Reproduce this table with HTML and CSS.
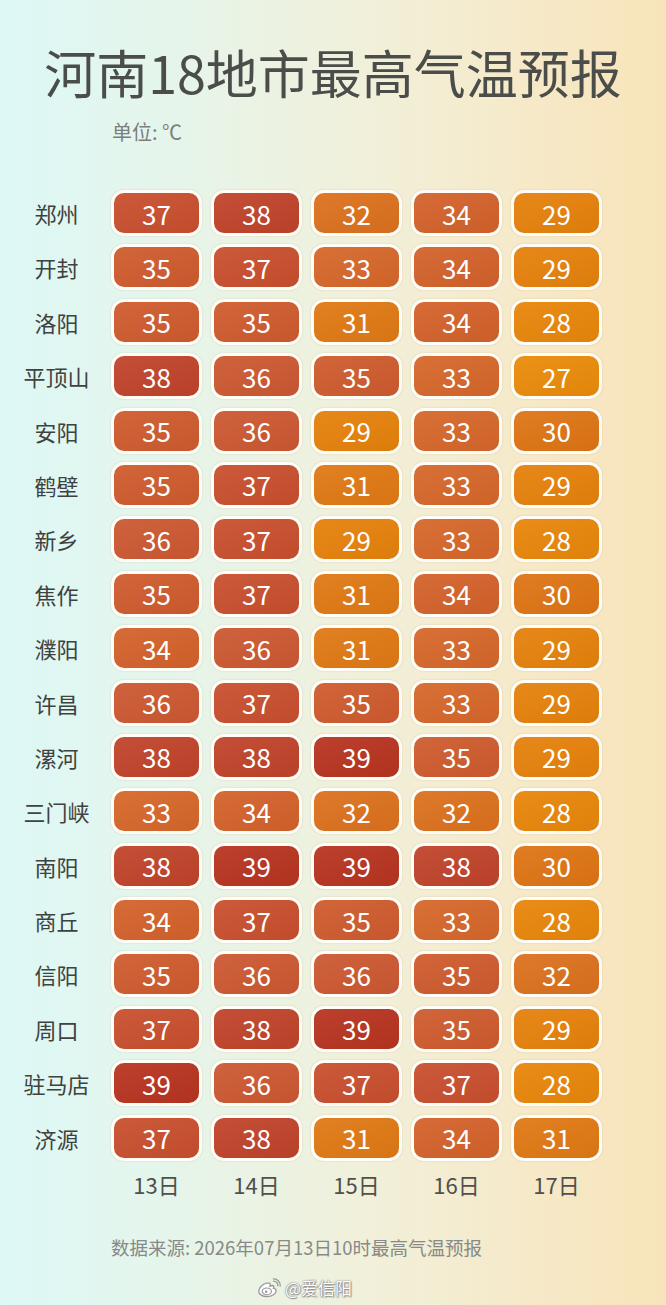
FILE: index.html
```html
<!DOCTYPE html>
<html lang="zh-CN">
<head>
<meta charset="utf-8">
<title>河南18地市最高气温预报</title>
<link rel="stylesheet" href="styles.css">
</head>
<body>
<main class="page">
  <h1 class="title">河南18地市最高气温预报</h1>
  <div class="unit">单位: ℃</div>
  <div class="grid">
    <div class="city">郑州</div><div class="cell t37">37</div><div class="cell t38">38</div><div class="cell t32">32</div><div class="cell t34">34</div><div class="cell t29">29</div>
    <div class="city">开封</div><div class="cell t35">35</div><div class="cell t37">37</div><div class="cell t33">33</div><div class="cell t34">34</div><div class="cell t29">29</div>
    <div class="city">洛阳</div><div class="cell t35">35</div><div class="cell t35">35</div><div class="cell t31">31</div><div class="cell t34">34</div><div class="cell t28">28</div>
    <div class="city">平顶山</div><div class="cell t38">38</div><div class="cell t36">36</div><div class="cell t35">35</div><div class="cell t33">33</div><div class="cell t27">27</div>
    <div class="city">安阳</div><div class="cell t35">35</div><div class="cell t36">36</div><div class="cell t29">29</div><div class="cell t33">33</div><div class="cell t30">30</div>
    <div class="city">鹤壁</div><div class="cell t35">35</div><div class="cell t37">37</div><div class="cell t31">31</div><div class="cell t33">33</div><div class="cell t29">29</div>
    <div class="city">新乡</div><div class="cell t36">36</div><div class="cell t37">37</div><div class="cell t29">29</div><div class="cell t33">33</div><div class="cell t28">28</div>
    <div class="city">焦作</div><div class="cell t35">35</div><div class="cell t37">37</div><div class="cell t31">31</div><div class="cell t34">34</div><div class="cell t30">30</div>
    <div class="city">濮阳</div><div class="cell t34">34</div><div class="cell t36">36</div><div class="cell t31">31</div><div class="cell t33">33</div><div class="cell t29">29</div>
    <div class="city">许昌</div><div class="cell t36">36</div><div class="cell t37">37</div><div class="cell t35">35</div><div class="cell t33">33</div><div class="cell t29">29</div>
    <div class="city">漯河</div><div class="cell t38">38</div><div class="cell t38">38</div><div class="cell t39">39</div><div class="cell t35">35</div><div class="cell t29">29</div>
    <div class="city">三门峡</div><div class="cell t33">33</div><div class="cell t34">34</div><div class="cell t32">32</div><div class="cell t32">32</div><div class="cell t28">28</div>
    <div class="city">南阳</div><div class="cell t38">38</div><div class="cell t39">39</div><div class="cell t39">39</div><div class="cell t38">38</div><div class="cell t30">30</div>
    <div class="city">商丘</div><div class="cell t34">34</div><div class="cell t37">37</div><div class="cell t35">35</div><div class="cell t33">33</div><div class="cell t28">28</div>
    <div class="city">信阳</div><div class="cell t35">35</div><div class="cell t36">36</div><div class="cell t36">36</div><div class="cell t35">35</div><div class="cell t32">32</div>
    <div class="city">周口</div><div class="cell t37">37</div><div class="cell t38">38</div><div class="cell t39">39</div><div class="cell t35">35</div><div class="cell t29">29</div>
    <div class="city">驻马店</div><div class="cell t39">39</div><div class="cell t36">36</div><div class="cell t37">37</div><div class="cell t37">37</div><div class="cell t28">28</div>
    <div class="city">济源</div><div class="cell t37">37</div><div class="cell t38">38</div><div class="cell t31">31</div><div class="cell t34">34</div><div class="cell t31">31</div>
    <div></div><div class="day">13日</div><div class="day">14日</div><div class="day">15日</div><div class="day">16日</div><div class="day">17日</div>
  </div>
  <div class="source">数据来源: 2026年07月13日10时最高气温预报</div>
  <div class="mark">
    <svg class="weibo" width="26" height="20" viewBox="0 0 26 20" aria-hidden="true">
      <path d="M10.5 5.2c-3.8 1-7.8 4.6-7.8 8.1 0 3.2 4 5.3 8.3 5.3 5.3 0 9.1-3 9.1-5.6 0-1.9-1.8-2.6-2.7-2.8.8-1.3.9-2.6-.9-2.7-1.2 0-2.6.6-2.6.6s.9-2.6-.5-3c-.8-.2-1.8 0-2.9.1z" fill="#fff" stroke="#9a9a9a" stroke-width="1.3"/>
      <ellipse cx="10.8" cy="13.4" rx="4.6" ry="3.4" fill="#fff" stroke="#9a9a9a" stroke-width="1.2"/>
      <circle cx="10.2" cy="13.8" r="1.3" fill="#9a9a9a"/>
      <path d="M17.5 3.2c2.6 0 4.6 2 4.4 4.6M17.4 0.9c4.2-.2 7.2 3.3 6.8 7.2" fill="none" stroke="#9a9a9a" stroke-width="1.3" stroke-linecap="round"/>
    </svg>
    <span class="mark-text">@爱信阳</span>
  </div>
</main>
</body>
</html>
```

FILE: styles.css
```css
html, body {
  margin: 0;
  padding: 0;
}
body {
  width: 666px;
  min-height: 1305px;
  background: linear-gradient(90deg, #ddf8f6 0%, #e5f5eb 25%, #f1f0da 55%, #f6e9c8 80%, #f8e4ba 100%);
  font-family: "Noto Sans CJK SC", "Noto Sans", sans-serif;
  overflow: hidden;
}
.page {
  display: flex;
  flex-direction: column;
  height: 1305px;
}
.title {
  margin: 41px 0 0;
  font-size: 52px;
  line-height: 62px;
  font-weight: 400;
  color: #4b4d4b;
  text-align: center;
}
.unit {
  margin: 16px 0 0 112px;
  font-size: 20px;
  line-height: 26px;
  color: #7b7e7c;
}
.grid {
  margin: 45px 0 0 11px;
  display: grid;
  grid-template-columns: repeat(6, 91px);
  grid-auto-rows: 46px;
  column-gap: 9px;
  row-gap: 8.4px;
}
.city {
  display: flex;
  align-items: center;
  justify-content: center;
  font-size: 22px;
  color: #3f4240;
}
.cell {
  box-sizing: border-box;
  border: 3px solid #fffdf6;
  border-radius: 13px;
  display: flex;
  align-items: center;
  justify-content: center;
  color: #fff;
  font-size: 26px;
  font-weight: 400;
  box-shadow: 0 0 2px rgba(180, 150, 110, 0.35);
  background-image: linear-gradient(160deg, rgba(255,255,255,0.06), rgba(0,0,0,0.04));
}
.day {
  display: flex;
  align-items: center;
  justify-content: center;
  font-size: 22px;
  color: #4e504e;
  margin-top: -17px;
}
.t39 { background-color: #b73420; }
.t38 { background-color: #c0432a; }
.t37 { background-color: #c84f2e; }
.t36 { background-color: #cc5832; }
.t35 { background-color: #cf5b2e; }
.t34 { background-color: #d3622b; }
.t33 { background-color: #d6672a; }
.t32 { background-color: #dc711e; }
.t31 { background-color: #e07914; }
.t30 { background-color: #de7414; }
.t29 { background-color: #e5810b; }
.t28 { background-color: #e8860a; }
.t27 { background-color: #ea8b09; }
.source {
  margin: 19px 0 0 111px;
  font-size: 18.5px;
  line-height: 26px;
  color: #878a88;
}
.mark {
  margin: 17px 0 0 256px;
  display: flex;
  align-items: center;
  gap: 3px;
}
.mark-text {
  font-size: 17px;
  line-height: 22px;
  color: #fff;
  text-shadow: 0 0 1px #777, 0 0 2px #888, 1px 1px 1px #999;
}
```
